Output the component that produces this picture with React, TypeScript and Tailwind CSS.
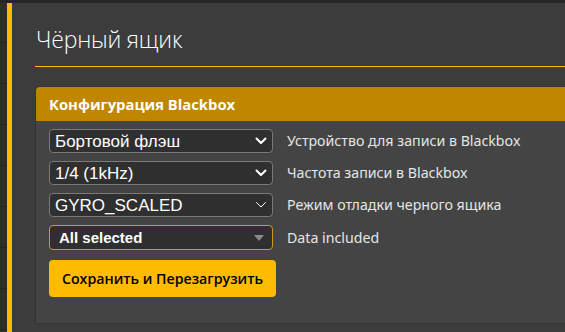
import React from "react";

const Chevron = ({ thin = false }: { thin?: boolean }) => (
  <svg width="12" height="8" viewBox="0 0 12 8" className="shrink-0">
    <path
      d="M1.5 1.5 L6 6 L10.5 1.5"
      fill="none"
      stroke="#ffffff"
      strokeWidth={thin ? 1 : 2}
      strokeLinecap="round"
      strokeLinejoin="round"
    />
  </svg>
);

const Row = ({
  value,
  label,
  thin,
}: {
  value: string;
  label: string;
  thin?: boolean;
}) => (
  <div className="flex items-center h-[24px]">
    <div className="w-[224px] h-[24px] flex items-center justify-between pl-[5px] pr-[5px] rounded-[4px] border border-[#7a7a7a] bg-[#2f2f2f] text-white text-[17px] leading-none [font-family:'Liberation_Sans',Arial,sans-serif]">
      <span>{value}</span>
      <Chevron thin={thin} />
    </div>
    <span className="ml-[14px] text-[14.2px] text-[#e6e6e6] [font-family:'Noto_Sans',sans-serif]">
      {label}
    </span>
  </div>
);

export default function App() {
  const lines = [0, 1, 2, 3, 4, 5, 6, 7];
  return (
    <div className="w-[565px] h-[332px] overflow-hidden bg-[#3b3c3b] flex flex-col">
      <div className="h-[3px] bg-[#262626] shrink-0" />
      <div className="flex flex-1 min-h-0">
        <div className="w-[7px] bg-[#2e2e2e] flex flex-col shrink-0">
          <div className="h-[40px] border-b border-[#232323] shrink-0" />
          {lines.map((i) => (
            <div key={i} className="h-[41px] border-b border-[#232323] shrink-0" />
          ))}
        </div>
        <div className="w-[5px] bg-[#ffbb00] shrink-0" />
        <div className="flex-1 flex flex-col pl-[23px] min-w-0">
          <div className="pt-[25px] pl-[1px] h-[63px] text-[23px] font-light text-white leading-none [font-family:'Open_Sans',sans-serif] tracking-[-0.2px]">
            Чёрный ящик
          </div>
          <div className="h-px bg-[#ffbb00] shrink-0" />
          <div className="mt-[19px] border border-[#333433] rounded-tl-[5px] bg-[#434443] border-r-0 flex flex-col pb-[26px]">
            <div className="h-[34px] bg-[#c08600] rounded-tl-[4px] flex items-center pl-[13px] text-white font-bold text-[14.8px] [font-family:'Open_Sans',sans-serif]">
              Конфигурация Blackbox
            </div>
            <div className="flex flex-col pl-[13px] pt-[8px] gap-[8px]">
              <Row value="Бортовой флэш" label="Устройство для записи в Blackbox" />
              <Row value="1/4 (1kHz)" label="Частота записи в Blackbox" />
              <Row value="GYRO_SCALED" label="Режим отладки черного ящика" thin />
              <div className="flex items-center h-[25px]">
                <div className="w-[224px] h-[25px] flex items-center justify-between pl-[9px] pr-[8px] rounded-[4px] border border-[#d4961c] bg-[#2f2f2f] text-white text-[15px] font-bold leading-none [font-family:'Liberation_Sans',Arial,sans-serif]">
                  <span>All selected</span>
                  <svg width="10" height="6" viewBox="0 0 10 6">
                    <path d="M0 0 L10 0 L5 6 Z" fill="#8a8a8a" />
                  </svg>
                </div>
                <span className="ml-[14px] text-[14.2px] text-[#e6e6e6] [font-family:'Noto_Sans',sans-serif]">
                  Data included
                </span>
              </div>
              <button className="mt-[2px] w-[227px] h-[37px] rounded-[4px] bg-[#ffbb00] text-black font-semibold text-[14.2px] [font-family:'Open_Sans',sans-serif] flex items-center justify-center">
                Сохранить и Перезагрузить
              </button>
            </div>
          </div>
          <div className="flex-1" />
        </div>
      </div>
    </div>
  );
}
